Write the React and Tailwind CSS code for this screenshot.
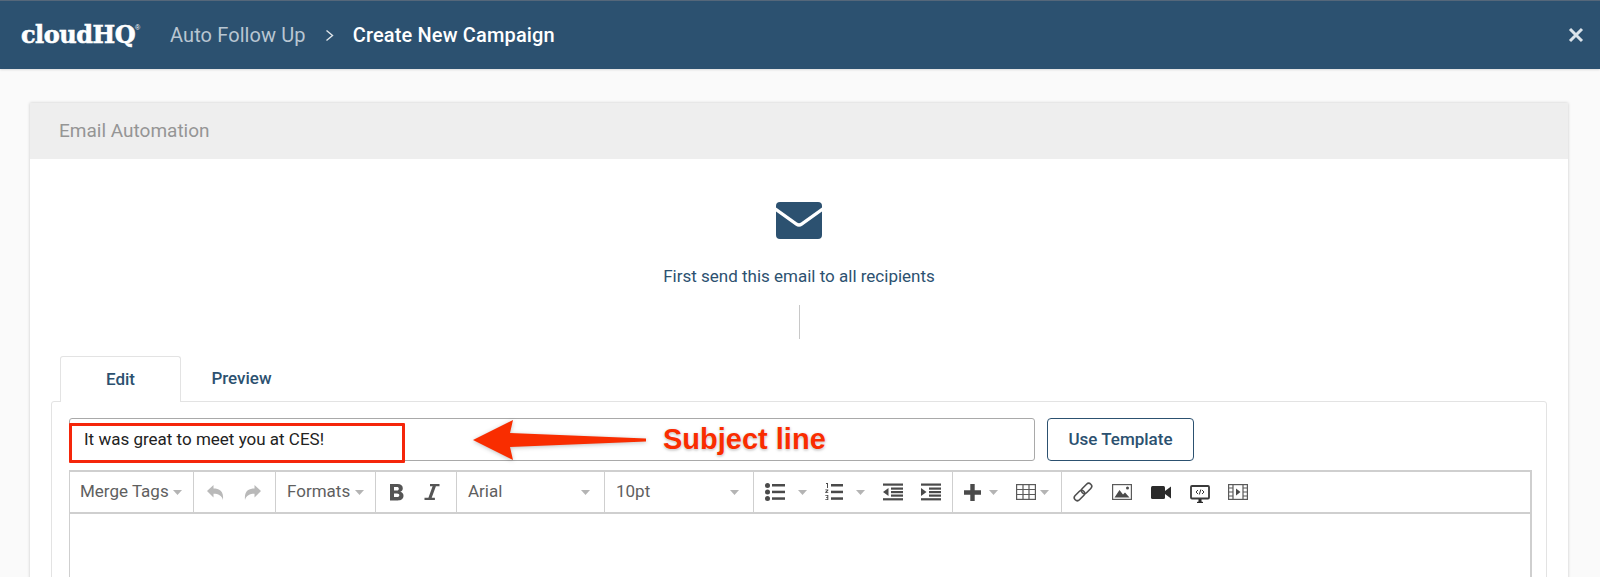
import React from "react";

const Caret = () => (
  <svg width="9" height="5" viewBox="0 0 9 5" className="shrink-0"><path d="M0 0h9L4.5 5z" fill="#b4b4b4" /></svg>
);

const Undo = ({ flip }) => (
  <svg width="17" height="15" viewBox="0 0 17 15" className={flip ? "-scale-x-100" : ""} fill="#b9b9b9">
    <path d="M0 6L6.500 0v3.600C12 3.600 17 5.800 16 15c-1.400-4.600-4.600-6.200-9.500-6.200V12.500z" />
  </svg>
);

const Group = ({ w, className = "", children }) => (
  <div className={`flex h-full shrink-0 items-center border-r border-[#cfcfcf] ${w} ${className}`}>{children}</div>
);

export default function App() {
  return (
    <div className="h-[577px] w-[1600px] overflow-hidden bg-[#fafafa] font-['Roboto',sans-serif]">
      <header className="flex h-[69px] items-center border-t border-[#55677a] bg-[#2c5170] shadow-[0_1px_2px_rgba(0,0,0,0.12)]">
        <div className="ml-[21px] flex w-[149px] items-start font-['DejaVu_Serif',serif] text-[24px] leading-none font-bold tracking-[-0.5px] text-white [-webkit-text-stroke:0.6px_white]">
          cloudHQ<span className="mt-[1px] font-['Liberation_Sans',sans-serif] text-[7px] font-normal tracking-normal [-webkit-text-stroke:0]">®</span>
        </div>
        <span className="text-[20px] tracking-[0.1px] text-[#b9c6d2]">Auto Follow Up</span>
        <svg width="9" height="13" viewBox="0 0 9 13" className="mx-[19px]" fill="none" stroke="#dfe5ea" strokeWidth="1.4"><path d="M1.500 1.500l6 5-6 5" /></svg>
        <span className="text-[20px] font-medium tracking-[0.15px] text-white">Create New Campaign</span>
        <svg width="16" height="16" viewBox="0 0 16 16" className="mr-[16px] ml-auto" fill="none" stroke="#dce4ea" strokeWidth="3"><path d="M2 2l12 12M14 2L2 14" /></svg>
      </header>

      <main className="px-[30px] pt-[34px]">
        <section className="h-[500px] w-[1538px] bg-white shadow-[0_0_3px_rgba(0,0,0,0.2)]">
          <div className="flex h-[56px] items-center bg-[#eeeeee] pl-[29px] text-[19px] text-[#959595]">Email Automation</div>

          <div className="flex flex-col items-center pt-[43px]">
            <svg width="46" height="37" viewBox="0 0 46 37" fill="#2c5170">
              <path d="M4 0h38a4 4 0 0 1 4 4v1.500L25 20.500a3.600 3.600 0 0 1-4 0L0 5.500V4a4 4 0 0 1 4-4z" />
              <path d="M0 9.500l19.500 14a6 6 0 0 0 7 0L46 9.500V33a4 4 0 0 1-4 4H4a4 4 0 0 1-4-4z" />
            </svg>
            <p className="mt-[25px] text-[17px] leading-[24px] text-[#2c5170]">First send this email to all recipients</p>
            <div className="mt-[17px] h-[34px] w-px bg-[#c8c8c8]" />
          </div>

          <div className="mt-[17px] flex h-[45px] pl-[30px]">
            <div className="relative z-10 flex h-[46px] w-[121px] items-center justify-center rounded-t-[3px] border border-b-0 border-[#e3e3e3] bg-white text-[17px] font-medium text-[#2c5170]">Edit</div>
            <div className="flex w-[121px] items-center justify-center text-[17px] font-medium text-[#2c5170]">Preview</div>
          </div>

          <div className="mx-[21px] h-[300px] rounded-[3px] border border-[#e3e3e3] px-[17px] pt-[16px]">
            <div className="relative flex items-center gap-[12px]">
              <div className="flex h-[43px] w-[966px] items-center rounded-[3px] border border-[#a9a9a9] pl-[14px] text-[17px] text-[#222]">It was great to meet you at CES!</div>
              <button className="h-[43px] w-[147px] rounded-[4px] border border-[#2c5170] text-[17px] font-medium text-[#2c5170]">Use Template</button>

              <div className="absolute top-[5px] left-0 h-[40px] w-[336px] rounded-[1px] border-[3px] border-[#f5260a]" />
              <svg width="173" height="40" viewBox="0 0 173 40" className="absolute top-[2px] left-[404px] drop-shadow-[0_1px_2px_rgba(0,0,0,0.25)]" fill="#f92d00">
                <path d="M0 20L40 0l-3 13 136 5.500v3L37 27l3 13z" />
              </svg>
              <span className="absolute top-[1px] left-[594px] font-['Liberation_Sans',sans-serif] text-[29px] leading-[40px] font-bold text-[#f92d00] [text-shadow:0_0_2px_#fff,0_1px_3px_rgba(0,0,0,0.35)]">Subject line</span>
            </div>

            <div className="mt-[9px] h-[300px] w-[1463px] border-t-2 border-r-2 border-l border-[#cfcfcf]">
              <div className="flex h-[42px] items-center border-b-2 border-[#cfcfcf] text-[17px] text-[#5f5f5f]">
                <Group w="w-[124px]" className="gap-[4px] pl-[10px]">Merge Tags<Caret /></Group>
                <Group w="w-[82px]" className="gap-[20px] pl-[13px]"><Undo /><Undo flip /></Group>
                <Group w="w-[100px]" className="gap-[5px] pl-[11px]">Formats<Caret /></Group>
                <Group w="w-[81px]" className="gap-[20px] pl-[13px]">
                  <svg width="15" height="18" viewBox="0 0 15 18" fill="#555"><path d="M1 1h7.500c3.600 0 5.300 1.800 5.300 4.300 0 1.700-.9 3-2.500 3.500 2 .5 3.200 2 3.200 4 0 3-2.200 4.700-5.700 4.700H1zm4 3v3.500h2.800c1.400 0 2-.7 2-1.800S9.200 4 7.800 4zm0 6.400V14h3c1.600 0 2.300-.7 2.300-1.800s-.8-1.800-2.300-1.800z" /></svg>
                  <svg width="16" height="18" viewBox="0 0 16 18" fill="#555"><path d="M6 1h9.500v2.200h-3.600L7.700 14.800h3.200V17H.5v-2.200h3.900L8.600 3.200H6z" /></svg>
                </Group>
                <Group w="w-[148px]" className="justify-between pr-[14px] pl-[11px]">Arial<Caret /></Group>
                <Group w="w-[149px]" className="justify-between pr-[14px] pl-[11px]">10pt<Caret /></Group>

                <Group w="w-[199px]" className="pl-[11px]">
                  <svg width="20" height="18" viewBox="0 0 20 18" className="shrink-0" fill="#4a4a4a"><circle cx="2.500" cy="2.500" r="2.500" /><circle cx="2.500" cy="9" r="2.500" /><circle cx="2.500" cy="15.500" r="2.500" /><rect x="7" y="1" width="13" height="2.500" /><rect x="7" y="7.700" width="13" height="2.500" /><rect x="7" y="14.300" width="13" height="2.500" /></svg>
                  <span className="ml-[13px]"><Caret /></span>
                  <svg width="18" height="18" viewBox="0 0 18 18" className="ml-[18px]" fill="#4a4a4a"><path d="M1 0h2v5H2V1H1zM.3 6.500h3v1L1.500 9.300h1.800v.7h-3V9L2 7.200H.3zM.3 12h3v5h-3v-.7h2v-1.500H1V14h1.300v-1.300h-2z" /><rect x="6" y="1" width="12" height="2.500" /><rect x="6" y="7.700" width="12" height="2.500" /><rect x="6" y="14.300" width="12" height="2.500" /></svg>
                  <span className="ml-[13px]"><Caret /></span>
                  <svg width="20" height="18" viewBox="0 0 20 18" className="ml-[18px]" fill="#4a4a4a"><rect y="0.500" width="20" height="2.200" /><rect x="8" y="4.500" width="12" height="2.200" /><rect x="8" y="8" width="12" height="2.200" /><rect x="8" y="11.500" width="12" height="2.200" /><rect y="15.200" width="20" height="2.200" /><path d="M5.500 5v8L0 9z" /></svg>
                  <svg width="20" height="18" viewBox="0 0 20 18" className="ml-[18px]" fill="#4a4a4a"><rect y="0.500" width="20" height="2.200" /><rect x="8" y="4.500" width="12" height="2.200" /><rect x="8" y="8" width="12" height="2.200" /><rect x="8" y="11.500" width="12" height="2.200" /><rect y="15.200" width="20" height="2.200" /><path d="M0 5v8l5.500-4z" /></svg>
                </Group>

                <Group w="w-[109px]" className="pl-[11px]">
                  <svg width="17" height="17" viewBox="0 0 17 17" fill="#4a4a4a"><path d="M6.300 0h4.400v6.300H17v4.400h-6.300V17H6.300v-6.300H0V6.300h6.300z" /></svg>
                  <span className="ml-[8px]"><Caret /></span>
                  <svg width="20" height="16" viewBox="0 0 20 16" className="ml-[18px]" fill="none" stroke="#5a5a5a" strokeWidth="1.200"><rect x="0.600" y="0.600" width="18.800" height="14.800" /><path d="M0 5.500h20M0 10.500h20M7 0v16M13 0v16" /></svg>
                  <span className="ml-[4px]"><Caret /></span>
                </Group>

                <div className="flex h-full items-center pl-[11px]">
                  <svg width="20" height="20" viewBox="0 0 20 20" fill="none" stroke="#4f4f4f" strokeWidth="1.600">
                    <g transform="rotate(-45 10 10)"><rect x="-1" y="7" width="12" height="6" rx="3" /><rect x="9" y="7" width="12" height="6" rx="3" /></g>
                  </svg>
                  <svg width="20" height="16" viewBox="0 0 20 16" className="ml-[19px]"><rect x="0.600" y="0.600" width="18.800" height="14.800" fill="none" stroke="#5a5a5a" strokeWidth="1.200" /><path d="M2.500 13.500L7.500 6l3.500 4.500 2-2 4.500 5z" fill="#4a4a4a" /><circle cx="15.500" cy="4" r="1.500" fill="#4a4a4a" /></svg>
                  <svg width="20" height="13" viewBox="0 0 20 13" className="ml-[19px]" fill="#2b2b2b"><rect width="14" height="13" rx="1.500" /><path d="M14 5l6-4.500v12L14 8z" /></svg>
                  <svg width="20" height="19" viewBox="0 0 20 19" className="ml-[19px] translate-y-[2px]"><rect x="1" y="1" width="18" height="12.500" rx="1" fill="#fff" stroke="#3a3a3a" strokeWidth="1.800" /><path d="M7 18h6v-1l-1.500-.5V14h-3v2.500L7 17z" fill="#2b2b2b" /><path d="M8 5L6 7l2 2M12 5l2 2-2 2M10.800 4.500l-1.500 5" fill="none" stroke="#3a3a3a" strokeWidth="1" /></svg>
                  <svg width="20" height="16" viewBox="0 0 20 16" className="ml-[18px]"><rect x="0.600" y="0.600" width="18.800" height="14.800" fill="none" stroke="#5a5a5a" strokeWidth="1.200" /><path d="M5 0v16M15 0v16M0 4h5M0 8h5M0 12h5M15 4h5M15 8h5M15 12h5" stroke="#5a5a5a" strokeWidth="1.200" /><path d="M8 4.500v7l4.500-3.500z" fill="#4a4a4a" /></svg>
                </div>
              </div>
            </div>
          </div>
        </section>
      </main>
    </div>
  );
}
